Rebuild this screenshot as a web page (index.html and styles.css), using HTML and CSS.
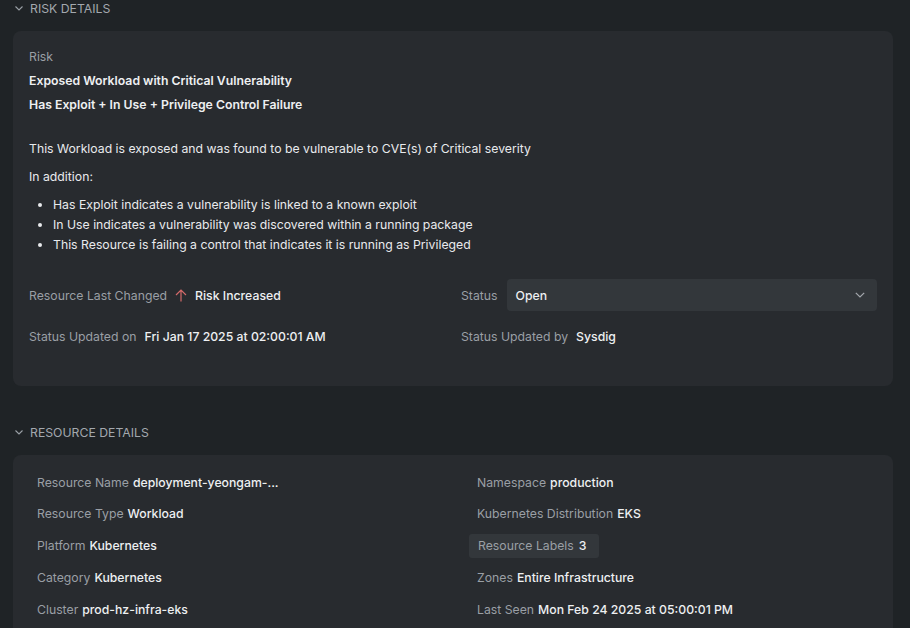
FILE: index.html
```html
<!DOCTYPE html>
<html lang="en">
<head>
<meta charset="utf-8">
<link rel="stylesheet" href="styles.css">
</head>
<body>
<div class="page">
  <div class="section-header">
    <svg class="chev" width="8" height="5" viewBox="0 0 8 5"><path d="M0.5 0.5 L4 4 L7.5 0.5" fill="none" stroke="#9aa0a6" stroke-width="1.1"/></svg>
    <span>RISK DETAILS</span>
  </div>
  <div class="card risk-card">
    <div class="risk-label">Risk</div>
    <div class="risk-title">Exposed Workload with Critical Vulnerability</div>
    <div class="risk-title">Has Exploit + In Use + Privilege Control Failure</div>
    <p class="desc">This Workload is exposed and was found to be vulnerable to CVE(s) of Critical severity</p>
    <p class="addition">In addition:</p>
    <ul class="bullets">
      <li>Has Exploit indicates a vulnerability is linked to a known exploit</li>
      <li>In Use indicates a vulnerability was discovered within a running package</li>
      <li>This Resource is failing a control that indicates it is running as Privileged</li>
    </ul>
    <div class="status-grid">
      <div class="field">
        <span class="lbl">Resource Last Changed</span>
        <svg class="up" width="12" height="13" viewBox="0 0 12 13"><path d="M6 12.5 V1 M1 6 L6 1 L11 6" fill="none" stroke="#d46a6a" stroke-width="1.2"/></svg>
        <span class="val">Risk Increased</span>
      </div>
      <div class="field">
        <span class="lbl">Status</span>
        <div class="select">
          <span class="val">Open</span>
          <svg width="10" height="6" viewBox="0 0 10 6"><path d="M0.8 0.8 L5 5 L9.2 0.8" fill="none" stroke="#a4a8ad" stroke-width="1.2"/></svg>
        </div>
      </div>
      <div class="field">
        <span class="lbl">Status Updated on</span>
        <span class="val">Fri Jan 17 2025 at 02:00:01 AM</span>
      </div>
      <div class="field">
        <span class="lbl">Status Updated by</span>
        <span class="val">Sysdig</span>
      </div>
    </div>
  </div>

  <div class="section-header second">
    <svg class="chev" width="8" height="5" viewBox="0 0 8 5"><path d="M0.5 0.5 L4 4 L7.5 0.5" fill="none" stroke="#9aa0a6" stroke-width="1.1"/></svg>
    <span>RESOURCE DETAILS</span>
  </div>
  <div class="card res-card">
    <div class="item"><span class="lbl">Resource Name</span><span class="val">deployment-yeongam-...</span></div>
    <div class="item"><span class="lbl">Namespace</span><span class="val">production</span></div>
    <div class="item"><span class="lbl">Resource Type</span><span class="val">Workload</span></div>
    <div class="item"><span class="lbl">Kubernetes Distribution</span><span class="val">EKS</span></div>
    <div class="item"><span class="lbl">Platform</span><span class="val">Kubernetes</span></div>
    <div class="item"><span class="pill"><span class="lbl">Resource Labels</span><span class="val">3</span></span></div>
    <div class="item"><span class="lbl">Category</span><span class="val">Kubernetes</span></div>
    <div class="item"><span class="lbl">Zones</span><span class="val">Entire Infrastructure</span></div>
    <div class="item"><span class="lbl">Cluster</span><span class="val">prod-hz-infra-eks</span></div>
    <div class="item"><span class="lbl">Last Seen</span><span class="val">Mon Feb 24 2025 at 05:00:01 PM</span></div>
  </div>
</div>
</body>
</html>
```
FILE: styles.css
```css
html, body {
  margin: 0;
  padding: 0;
  background: #1f2326;
  height: 100%;
  overflow: hidden;
}
body {
  font-family: Inter, "Noto Sans", sans-serif;
  font-size: 12.25px;
  color: #e8eaed;
}
.page {
  margin-top: -4px;
  padding: 0 17px 0 13px;
}
.section-header {
  display: flex;
  align-items: center;
  height: 24px;
  color: #a3a8ae;
  font-size: 12.25px;
}
.section-header .chev {
  margin: 0 7px 0 2px;
}
.section-header.second {
  margin-top: 34px;
  margin-bottom: 11px;
}
.section-header:first-child {
  margin-bottom: 11px;
}
.card {
  background: #282b2f;
  border-radius: 8px;
}
.risk-card {
  padding: 14px 16px 34px 16px;
}
.risk-label {
  line-height: 24px;
  color: #9a9fa5;
}
.risk-title {
  line-height: 24px;
  font-weight: 600;
  color: #eef0f2;
}
.desc {
  margin: 22px 0 0;
  line-height: 20px;
  color: #e8eaed;
}
.addition {
  margin: 8px 0 0;
  line-height: 20px;
}
.bullets {
  margin: 8px 0 0;
  padding-left: 24px;
}
.bullets li {
  line-height: 20px;
}
.status-grid {
  margin-top: 24px;
  display: grid;
  grid-template-columns: 1fr 1fr;
  column-gap: 16px;
  row-gap: 9px;
}
.field {
  display: flex;
  align-items: center;
  height: 32px;
}
.lbl {
  color: #9a9fa5;
}
.val {
  color: #eef0f2;
  font-weight: 500;
}
.field .lbl {
  margin-right: 8px;
}
.field .up {
  margin-right: 8px;
}
.select {
  flex: 1;
  height: 32px;
  margin-left: 1px;
  background: #33373b;
  border-radius: 4px;
  display: flex;
  align-items: center;
  justify-content: space-between;
  padding: 0 12px 0 9px;
}
.res-card {
  padding: 15px 16px 20px 16px;
  display: grid;
  grid-template-columns: 1fr 1fr;
  column-gap: 32px;
  row-gap: 7.75px;
}
.item {
  height: 24px;
  display: flex;
  align-items: center;
  padding: 0 8px;
}
.item .lbl {
  margin-right: 4px;
}
.item:nth-child(6) {
  padding: 0;
}
.pill {
  display: inline-flex;
  align-items: center;
  height: 24px;
  padding: 0 13px 0 9px;
  background: #33373b;
  border-radius: 3px;
}
.pill .lbl {
  margin-right: 5px;
}
```
